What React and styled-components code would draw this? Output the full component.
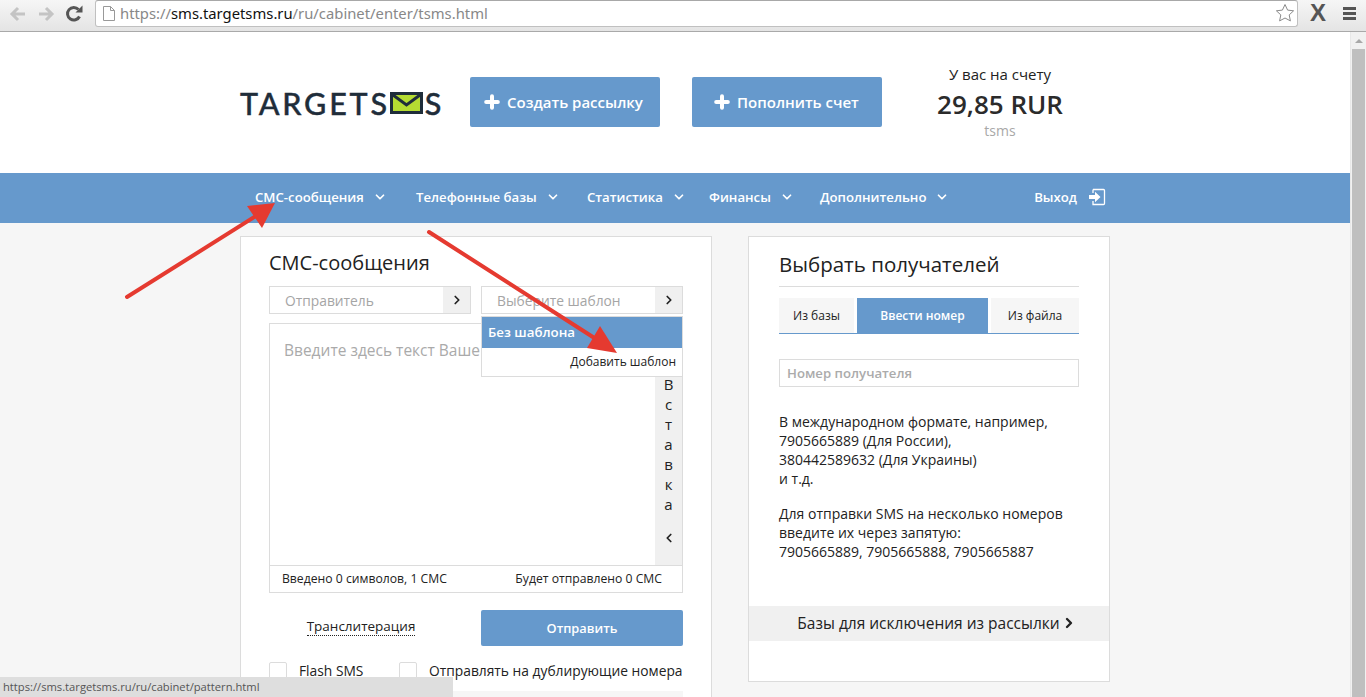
import React from 'react';
import styled, { createGlobalStyle } from 'styled-components';
import { ChevronDown, ChevronLeft, ChevronRight, Plus } from 'lucide-react';

const GlobalStyle = createGlobalStyle`
  html, body {
    margin: 0;
    padding: 0;
    height: 100%;
    overflow: hidden;
    background: #fff;
  }
  * { box-sizing: border-box; }
  body {
    font-family: "Open Sans", "Noto Sans", sans-serif;
    color: #222;
  }
`;

const NAV_ITEMS = [
  { title: 'СМС-сообщения', width: '161px' },
  { title: 'Телефонные базы', width: '171px' },
  { title: 'Статистика', width: '122px' },
  { title: 'Финансы', width: '111px' },
  { title: 'Дополнительно', width: 'auto' },
];

export default function App() {
  return (
    <Screen>
      <GlobalStyle />
      <BrowserBar>
        <ToolIcon viewBox="0 0 20 20">
          <path d="M17 10H5M10 4l-6 6 6 6" fill="none" stroke="#c4c4c4" strokeWidth="3" />
        </ToolIcon>
        <ToolIcon viewBox="0 0 20 20">
          <path d="M3 10h12M10 4l6 6-6 6" fill="none" stroke="#c4c4c4" strokeWidth="3" />
        </ToolIcon>
        <ToolIcon viewBox="0 0 20 20">
          <path d="M15.5 12.5A6.3 6.3 0 1 1 14.5 5.5" fill="none" stroke="#555" strokeWidth="3" />
          <path d="M11.5 8.5h7v-7z" fill="#555" />
        </ToolIcon>
        <AddressBar>
          <svg width="12" height="15" viewBox="0 0 12 15">
            <path d="M.5.5h7l4 4v10H.5zM7.5.5v4h4" fill="#fff" stroke="#999" />
          </svg>
          <Url>
            <span>https://</span><b>sms.targetsms.ru</b><span>/ru/cabinet/enter/tsms.html</span>
          </Url>
          <Star viewBox="0 0 20 20">
            <path d="M10 1.5l2.6 5.6 6 .7-4.4 4.1 1.2 6L10 15l-5.4 2.9 1.2-6L1.400 7.800l6-.7z" fill="#fff" stroke="#8a8a8a" />
          </Star>
        </AddressBar>
        <ExtensionMark>X</ExtensionMark>
        <MenuIcon><i /><i /><i /></MenuIcon>
      </BrowserBar>

      <Viewport>
        <Page>
          <Header>
            <Wrap>
              <HeaderRow>
                <Logo>
                  TARGETS
                  <svg width="33" height="22" viewBox="0 0 33 22">
                    <rect x="1.500" y="1.500" width="30" height="19" fill="#b5dc32" stroke="#1f2d3a" strokeWidth="3" />
                    <path d="M3 3l13.500 10L30 3" fill="none" stroke="#1f2d3a" strokeWidth="3" />
                  </svg>
                  S
                </Logo>
                <HeaderButton><Plus size={20} strokeWidth={4} absoluteStrokeWidth />Создать рассылку</HeaderButton>
                <HeaderButton $indent="20px"><Plus size={20} strokeWidth={4} absoluteStrokeWidth />Пополнить счет</HeaderButton>
                <Balance>
                  <BalanceLabel>У вас на счету</BalanceLabel>
                  <BalanceValue>29,85 RUR</BalanceValue>
                  <BalanceUnit>tsms</BalanceUnit>
                </Balance>
              </HeaderRow>
            </Wrap>
          </Header>

          <Nav>
            <NavRow>
              {NAV_ITEMS.map(item => (
                <NavItem key={item.title} $width={item.width}>
                  {item.title}
                  <ChevronDown size={14} strokeWidth={3} />
                </NavItem>
              ))}
              <Logout>
                Выход
                <svg width="18" height="18" viewBox="0 0 18 18">
                  <path d="M5 1.500h10.500a1 1 0 0 1 1 1v13a1 1 0 0 1-1 1H5v-3.500M5 5V1.500" fill="none" stroke="#fff" strokeWidth="1.300" />
                  <path d="M1 7h6V3.800L12.500 9 7 14.200V11H1z" fill="#fff" />
                </svg>
              </Logout>
            </NavRow>
          </Nav>

          <Content>
            <Columns>
              <Panel $width="472px" $pad="15px 28px 0" $height="480px">
                <PanelTitle>СМС-сообщения</PanelTitle>
                <SelectRow>
                  <Select>
                    <SelectText>Отправитель</SelectText>
                    <SelectArrow><ChevronRight size={14} strokeWidth={3} /></SelectArrow>
                  </Select>
                  <SelectWrap>
                    <Select>
                      <SelectText>Выберите шаблон</SelectText>
                      <SelectArrow><ChevronRight size={14} strokeWidth={3} /></SelectArrow>
                    </Select>
                    <Dropdown>
                      <DropdownActive>Без шаблона</DropdownActive>
                      <DropdownAction>Добавить шаблон</DropdownAction>
                    </Dropdown>
                  </SelectWrap>
                </SelectRow>
                <MessageBox>
                  <MessageMain>
                    <Placeholder>Введите здесь текст Ваше</Placeholder>
                    <InsertColumn>
                      {'Вставка'.split('').map((letter, i) => <span key={i}>{letter}</span>)}
                      <ChevronLeft size={14} strokeWidth={3} />
                    </InsertColumn>
                  </MessageMain>
                  <Counters>
                    <span>Введено 0 символов, 1 СМС</span>
                    <span>Будет отправлено 0 СМС</span>
                  </Counters>
                </MessageBox>
                <ActionRow>
                  <TranslitCell><Translit>Транслитерация</Translit></TranslitCell>
                  <SendButton>Отправить</SendButton>
                </ActionRow>
                <OptionRow>
                  <Check />
                  <OptionLabel $width="112px">Flash SMS</OptionLabel>
                  <Check />
                  <OptionLabel>Отправлять на дублирующие номера</OptionLabel>
                </OptionRow>
                <GreyStrip />
              </Panel>

              <Panel $width="362px" $pad="13px 30px 0" $height="446px">
                <RecipientTitle>Выбрать получателей</RecipientTitle>
                <Tabs>
                  <Tab $width="75px">Из базы</Tab>
                  <Tab $width="131px" $active>Ввести номер</Tab>
                  <Tab $width="88px">Из файла</Tab>
                </Tabs>
                <NumberInput>Номер получателя</NumberInput>
                <Hint>
                  В международном формате, например,<br />
                  7905665889 (Для России),<br />
                  380442589632 (Для Украины)<br />
                  и т.д.
                </Hint>
                <Hint>
                  Для отправки SMS на несколько номеров<br />
                  введите их через запятую:<br />
                  7905665889, 7905665888, 7905665887
                </Hint>
                <ExcludeBar>Базы для исключения из рассылки<ChevronRight size={16} strokeWidth={3.500} /></ExcludeBar>
              </Panel>
            </Columns>
          </Content>
        </Page>
        <Scrollbar>
          <ScrollUp />
          <ScrollThumb />
        </Scrollbar>
      </Viewport>

      <ArrowLayer width="1366" height="697" viewBox="0 0 1366 697">
        <g fill="#e53a30" stroke="#e53a30" strokeWidth="4" strokeLinecap="round">
          <line x1="127" y1="297" x2="256" y2="216" />
          <path d="M275 203l-28 3 15 22z" stroke="none" />
          <line x1="429" y1="232" x2="596" y2="339" />
          <path d="M617 353l-17-27-13 22z" stroke="none" />
        </g>
      </ArrowLayer>

      <StatusBubble>https://sms.targetsms.ru/ru/cabinet/pattern.html</StatusBubble>
    </Screen>
  );
}

const Screen = styled.div`
  position: relative;
  width: 1366px;
  height: 697px;
  overflow: hidden;
  display: flex;
  flex-direction: column;
`;

const BrowserBar = styled.div`
  flex: 0 0 32px;
  display: flex;
  align-items: flex-start;
  padding: 0 0 0 8px;
  gap: 8px;
  background: linear-gradient(#f6f6f6, #e4e4e4);
  border-bottom: 1px solid #a9a9a9;
`;

const ToolIcon = styled.svg`
  width: 20px;
  height: 20px;
  margin-top: 4px;
`;

const AddressBar = styled.div`
  width: 1203px;
  height: 27px;
  margin-left: 3px;
  padding: 0 2px 1px 7px;
  display: flex;
  align-items: center;
  gap: 5px;
  background: #fff;
  border: 1px solid #c0c0c0;
  border-top-color: #a8a8a8;
  border-radius: 3px;
`;

const Url = styled.div`
  flex: 1;
  font: 14.800px "Noto Sans", "Open Sans", sans-serif;
  color: #888;
  b { font-weight: 400; color: #111; }
`;

const Star = styled.svg`
  width: 20px;
  height: 20px;
`;

const ExtensionMark = styled.div`
  width: 24px;
  font: 700 24px/25px "Liberation Sans", sans-serif;
  color: #555;
  text-align: center;
`;

const MenuIcon = styled.div`
  display: flex;
  flex-direction: column;
  gap: 2px;
  margin: 7px 0 0 5px;
  i {
    display: block;
    width: 13px;
    height: 3px;
    background: #555;
  }
`;

const Viewport = styled.div`
  flex: 1;
  display: flex;
  min-height: 0;
`;

const Page = styled.div`
  flex: 1;
  min-width: 0;
  overflow: hidden;
`;

const Header = styled.header`
  height: 141px;
  background: #fff;
`;

const Wrap = styled.div`
  width: 870px;
  margin: 0 auto;
`;

const HeaderRow = styled.div`
  display: flex;
  align-items: flex-start;
  padding-top: 45px;
`;

const Logo = styled.div`
  width: 230px;
  margin-top: 12px;
  display: flex;
  align-items: center;
  font: 500 30.500px/28px Lato, sans-serif;
  letter-spacing: 2.800px;
  color: #1f2d3a;
  white-space: nowrap;
  -webkit-text-stroke: 0.4px #1f2d3a;
  svg { margin: 0 2px 0 0; }
`;

const HeaderButton = styled.button`
  width: 190px;
  height: 50px;
  margin-right: 32px;
  padding: 0 0 0 ${props => props.$indent || '12px'};
  display: flex;
  align-items: center;
  gap: 5px;
  border: 0;
  border-radius: 2px;
  background: #6699cc;
  color: #fff;
  font: 600 15px "Open Sans", sans-serif;
`;

const Balance = styled.div`
  margin: -13px 0 0 22px;
  width: 128px;
  text-align: center;
`;

const BalanceLabel = styled.div`
  font-size: 15px;
  line-height: 20px;
  color: #222;
`;

const BalanceValue = styled.div`
  margin-top: 3px;
  font-size: 26px;
  font-weight: 600;
  line-height: 34px;
  color: #2b2b2b;
  white-space: nowrap;
`;

const BalanceUnit = styled.div`
  font-size: 14px;
  line-height: 20px;
  color: #a8a8a8;
`;

const Nav = styled.nav`
  height: 50px;
  background: #6699cc;
`;

const NavRow = styled(Wrap)`
  height: 50px;
  display: flex;
  align-items: center;
  padding: 0 4px 2px 15px;
`;

const NavItem = styled.div`
  width: ${props => props.$width || 'auto'};
  display: flex;
  align-items: center;
  gap: 9px;
  color: #fff;
  font-size: 13.200px;
  font-weight: 600;
  white-space: nowrap;
`;

const Logout = styled(NavItem)`
  margin-left: auto;
  gap: 11px;
`;

const Content = styled.main`
  height: 474px;
  padding-top: 13px;
  background: #f6f6f6;
`;

const Columns = styled(Wrap)`
  display: flex;
  justify-content: space-between;
  align-items: flex-start;
`;

const Panel = styled.section`
  width: ${props => props.$width};
  height: ${props => props.$height};
  padding: ${props => props.$pad};
  background: #fff;
  border: 1px solid #dcdcdc;
`;

const PanelTitle = styled.h2`
  margin: 0 0 12px;
  font-size: 20px;
  font-weight: 400;
  line-height: 22px;
  color: #222;
`;

const SelectRow = styled.div`
  display: flex;
  justify-content: space-between;
`;

const SelectWrap = styled.div`
  position: relative;
`;

const Select = styled.div`
  width: 202px;
  height: 28px;
  display: flex;
  align-items: center;
  justify-content: space-between;
  background: #fff;
  border: 1px solid #dcdcdc;
`;

const SelectText = styled.span`
  padding-left: 15px;
  font-size: 13.800px;
  color: #a5a5a5;
`;

const SelectArrow = styled.span`
  width: 27px;
  height: 100%;
  display: flex;
  align-items: center;
  justify-content: center;
  background: #f0f0f0;
  color: #222;
`;

const Dropdown = styled.div`
  position: absolute;
  z-index: 2;
  top: 30px;
  left: 0;
  width: 202px;
  height: 61px;
  background: #fff;
  border: 1px solid #dcdcdc;
`;

const DropdownActive = styled.div`
  height: 31px;
  padding-left: 6px;
  background: #6699cc;
  color: #fff;
  font-size: 13.300px;
  font-weight: 600;
  line-height: 31px;
`;

const DropdownAction = styled.div`
  padding-right: 6px;
  text-align: right;
  font-size: 12px;
  line-height: 28px;
  color: #222;
`;

const MessageBox = styled.div`
  width: 414px;
  height: 270px;
  margin-top: 9px;
  display: flex;
  flex-direction: column;
  border: 1px solid #dcdcdc;
`;

const MessageMain = styled.div`
  flex: 1;
  display: flex;
  justify-content: space-between;
  min-height: 0;
`;

const Placeholder = styled.div`
  padding: 15px 0 0 14px;
  font-size: 15.500px;
  color: #aaa;
`;

const InsertColumn = styled.div`
  width: 27px;
  padding-top: 50px;
  display: flex;
  flex-direction: column;
  align-items: center;
  background: #f0f0f0;
  font-size: 15px;
  line-height: 20px;
  color: #222;
  svg { margin-top: 17px; }
`;

const Counters = styled.div`
  flex: 0 0 27px;
  display: flex;
  justify-content: space-between;
  padding: 0 20px 0 12px;
  border-top: 1px solid #dcdcdc;
  font-size: 12.200px;
  line-height: 26px;
  color: #222;
`;

const ActionRow = styled.div`
  display: flex;
  justify-content: space-between;
  align-items: center;
  margin-top: 17px;
`;

const TranslitCell = styled.div`
  width: 184px;
  padding-bottom: 6px;
  text-align: center;
`;

const Translit = styled.span`
  font-size: 13.500px;
  color: #222;
  border-bottom: 1px dotted #222;
`;

const SendButton = styled.button`
  width: 202px;
  height: 36px;
  border: 0;
  border-radius: 2px;
  background: #6699cc;
  color: #fff;
  font: 600 12.800px "Open Sans", sans-serif;
`;

const OptionRow = styled.div`
  display: flex;
  align-items: center;
  margin-top: 15px;
`;

const Check = styled.span`
  flex: 0 0 18px;
  height: 18px;
  background: #fff;
  border: 1px solid #dcdcdc;
  border-radius: 2px;
`;

const OptionLabel = styled.span`
  width: ${props => props.$width || 'auto'};
  padding-left: 12px;
  font-size: 13.800px;
  white-space: nowrap;
  color: #222;
`;

const GreyStrip = styled.div`
  width: 414px;
  height: 20px;
  margin-top: 11px;
  background: #f6f6f6;
`;

const RecipientTitle = styled.h2`
  margin: 0 0 11px;
  padding-bottom: 8px;
  border-bottom: 1px solid #dcdcdc;
  font-size: 20.500px;
  font-weight: 400;
  line-height: 28px;
  color: #222;
`;

const Tabs = styled.div`
  display: flex;
  justify-content: space-between;
  border-bottom: 1px solid #6699cc;
`;

const Tab = styled.div`
  width: ${props => props.$width};
  height: 35px;
  background: ${props => (props.$active ? '#6699cc' : '#f6f6f6')};
  color: ${props => (props.$active ? '#fff' : '#222')};
  font-size: 12px;
  font-weight: ${props => (props.$active ? 600 : 400)};
  line-height: 35px;
  text-align: center;
`;

const NumberInput = styled.div`
  height: 28px;
  margin: 25px 0 25px;
  padding-left: 7px;
  border: 1px solid #dcdcdc;
  font-size: 13.200px;
  font-weight: 600;
  line-height: 26px;
  color: #ababab;
`;

const Hint = styled.p`
  margin: 0 0 16px;
  font-size: 14px;
  line-height: 19px;
  white-space: nowrap;
  color: #222;
`;

const ExcludeBar = styled.div`
  height: 35px;
  margin: 45px -30px 0;
  padding: 0 0 2px 16px;
  display: flex;
  align-items: center;
  justify-content: center;
  gap: 1px;
  background: #f0f0f0;
  font-size: 15.500px;
  color: #222;
`;

const Scrollbar = styled.div`
  flex: 0 0 16px;
  display: flex;
  flex-direction: column;
  align-items: center;
  background: #f1f1f1;
  border-left: 1px solid #e8e8e8;
`;

const ScrollUp = styled.div`
  width: 0;
  height: 0;
  margin: 7px 0 6px;
  border-left: 4px solid transparent;
  border-right: 4px solid transparent;
  border-bottom: 4px solid #a8a8a8;
`;

const ScrollThumb = styled.div`
  width: 13px;
  flex: 1;
  background: #bfbfbf;
`;

const ArrowLayer = styled.svg`
  position: absolute;
  top: 0;
  left: 0;
  z-index: 5;
  pointer-events: none;
`;

const StatusBubble = styled.div`
  position: absolute;
  z-index: 6;
  left: 0;
  bottom: 0;
  width: 453px;
  height: 20px;
  padding-left: 3px;
  background: #dedede;
  font-size: 11.200px;
  line-height: 20px;
  color: #555;
`;
